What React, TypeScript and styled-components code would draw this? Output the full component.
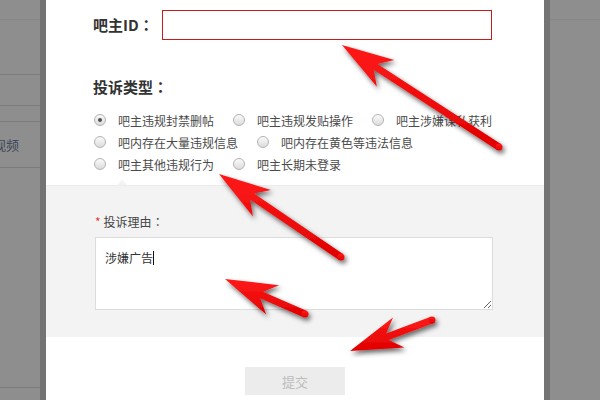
import React from 'react'
import styled, { createGlobalStyle } from 'styled-components';

const GlobalStyle = createGlobalStyle`
  html, body {
    margin: 0;
    padding: 0;
    background: #8e8e8e;
  }
  * {
    box-sizing: border-box;
  }
`;

const FONT = `"Microsoft YaHei", "Noto Sans CJK SC", "Noto Sans", sans-serif`;

const Screen = styled.div`
  position: relative;
  width: 600px;
  height: 400px;
  overflow: hidden;
  display: flex;
  background: #8e8e8e;
  font-family: ${FONT};
`;

const BehindLeft = styled.div`
  width: 40px;
  display: flex;
  flex-direction: column;
  overflow: hidden;
`;

const BehindRow = styled.div<{ h: number; faint?: boolean }>`
  height: ${p => p.h}px;
  flex-shrink: 0;
  border-bottom: 1px solid ${p => (p.faint ? '#878787' : '#7b7b7b')};
  display: flex;
  align-items: center;
  justify-content: flex-end;
  white-space: nowrap;
`;

const NavText = styled.span`
  font-size: 13px;
  color: #3d4656;
  margin-right: 12px;
`;

const NavBar = styled.span`
  width: 1px;
  height: 12px;
  background: #7a7a7a;
  margin-right: 9px;
`;

const BehindRight = styled.div`
  flex: 1;
  display: flex;
  flex-direction: column;
`;

const Modal = styled.div`
  width: 510px;
  flex-shrink: 0;
  border-left: 6px solid #737373;
  border-right: 6px solid #747474;
  background: #fff;
  display: flex;
  flex-direction: column;
`;

const Body = styled.div`
  padding: 10px 0 0 47px;
`;

const IdRow = styled.div`
  display: flex;
  align-items: center;
  gap: 8px;
  height: 30px;
`;

const Heading = styled.div`
  font-size: 15px;
  font-weight: bold;
  color: #333;
  line-height: 22px;
`;

// full-width colon centred in its box, as the Windows font draws it
const Colon = styled.span`
  font-family: "Noto Sans CJK TC", "Noto Sans CJK SC", sans-serif;
`;

const IdInput = styled.input`
  width: 330px;
  height: 30px;
  border: 1px solid #c71a1a;
  outline: none;
  background: #fff;
`;

const TypeTitle = styled(Heading)`
  margin-top: 36px;
`;

const RadioGroup = styled.div`
  margin: 11px 0 10px 1px;
`;

const RadioRow = styled.div`
  display: flex;
  align-items: center;
  height: 22px;
`;

const RadioItem = styled.label`
  display: inline-flex;
  align-items: center;
  margin-right: 19px;
  font-size: 12px;
  color: #4a4a4a;
  white-space: nowrap;
`;

const RadioDot = styled.span<{ checked?: boolean }>`
  position: relative;
  width: 12px;
  height: 12px;
  border-radius: 50%;
  border: 1px solid #b3b3b3;
  background: linear-gradient(#fafafa, #dcdcdc);
  margin-right: 12px;
  display: flex;
  align-items: center;
  justify-content: center;

  &::after {
    content: '';
    display: ${p => (p.checked ? 'block' : 'none')};
    width: 4px;
    height: 4px;
    border-radius: 50%;
    background: #505050;
  }
`;

const ReasonPanel = styled.div`
  position: relative;
  height: 152px;
  background: #f3f3f3;
  border-top: 1px solid #ececec;
  padding: 26px 0 0 49px;

  &::before {
    content: '';
    position: absolute;
    top: -6px;
    left: 71px;
    border-left: 5px solid transparent;
    border-right: 5px solid transparent;
    border-bottom: 5px solid #f3f3f3;
  }
`;

const ReasonLabel = styled.div`
  font-size: 12px;
  line-height: 20px;
  color: #444;
`;

const Star = styled.span`
  color: #e23b3b;
  margin-right: 3px;
`;

const TextWrap = styled.div`
  position: relative;
  margin-top: 5px;
  width: 398px;
`;

const ReasonBox = styled.textarea`
  display: block;
  width: 398px;
  height: 73px;
  border: 1px solid #dcdcdc;
  background: #fff;
  padding: 11px 9px;
  font-family: ${FONT};
  font-size: 12px;
  line-height: 18px;
  color: #333;
  outline: none;
  resize: both;
`;

const Caret = styled.span`
  position: absolute;
  left: 58px;
  top: 14px;
  width: 1px;
  height: 14px;
  background: #111;
`;

const Footer = styled.div`
  flex: 1;
  display: flex;
  justify-content: center;
  padding-top: 30px;
`;

const SubmitButton = styled.button`
  width: 100px;
  height: 28px;
  border: none;
  background: #ececec;
  color: #bdbdbd;
  font-family: ${FONT};
  font-size: 13px;
  cursor: default;
`;

const ArrowLayer = styled.svg`
  position: absolute;
  left: 0;
  top: 0;
  pointer-events: none;
`;

type Pt = [number, number];

// builds a notched arrow shape pointing from tail to tip
const arrowPoints = (tip: Pt, tail: Pt, head = 52, half = 16, notch = 40, shaft = 7) => {
  const dx = tail[0] - tip[0];
  const dy = tail[1] - tip[1];
  const len = Math.hypot(dx, dy);
  const ux = dx / len;
  const uy = dy / len;
  const px = -uy;
  const py = ux;
  const at = (a: number, b: number): string =>
    `${(tip[0] + ux * a + px * b).toFixed(1)},${(tip[1] + uy * a + py * b).toFixed(1)}`;
  const s = shaft / 2;
  return [
    at(0, 0),
    at(head, half),
    at(notch, s),
    at(len, s),
    at(len, -s),
    at(notch, -s),
    at(head, -half),
  ].join(' ');
};

const arrows: { tip: Pt; tail: Pt }[] = [
  { tip: [342, 45], tail: [499, 147] },
  { tip: [219, 174], tail: [341, 257] },
  { tip: [225, 279], tail: [305, 314] },
  { tip: [350, 351], tail: [432, 320] },
];

const Arrows = () => (
  <ArrowLayer width="600" height="400" viewBox="0 0 600 400">
    <defs>
      <filter id="arrowShadow" x="-20%" y="-20%" width="140%" height="140%">
        <feDropShadow dx="2" dy="3" stdDeviation="2.5" floodColor="#000" floodOpacity="0.6" />
      </filter>
      <linearGradient id="arrowFill" x1="0" y1="0" x2="0" y2="1">
        <stop offset="0" stopColor="#ff1a1a" />
        <stop offset="1" stopColor="#e00000" />
      </linearGradient>
    </defs>
    {arrows.map((a, i) => (
      <g key={i} filter="url(#arrowShadow)" fill="url(#arrowFill)">
        <polygon points={arrowPoints(a.tip, a.tail)} />
        <circle cx={a.tail[0]} cy={a.tail[1]} r="3.5" />
      </g>
    ))}
  </ArrowLayer>
);

const radioRows: { text: string; checked?: boolean }[][] = [
  [{ text: '吧主违规封禁删帖', checked: true }, { text: '吧主违规发贴操作' }, { text: '吧主涉嫌谋私获利' }],
  [{ text: '吧内存在大量违规信息' }, { text: '吧内存在黄色等违法信息' }],
  [{ text: '吧主其他违规行为' }, { text: '吧主长期未登录' }],
];

const App = () => {
  return (
    <>
      <GlobalStyle />
      <Screen>
        <BehindLeft>
          <BehindRow h={20} faint />
          <BehindRow h={55} />
          <BehindRow h={31} />
          <BehindRow h={16} />
          <BehindRow h={46}>
            <NavText>视频</NavText>
            <NavBar />
          </BehindRow>
          <BehindRow h={220} />
        </BehindLeft>

        <Modal>
          <Body>
            <IdRow>
              <Heading>吧主ID<Colon>：</Colon></Heading>
              <IdInput type="text" />
            </IdRow>

            <TypeTitle>投诉类型<Colon>：</Colon></TypeTitle>

            <RadioGroup>
              {radioRows.map((row, r) => (
                <RadioRow key={r}>
                  {row.map(item => (
                    <RadioItem key={item.text}>
                      <RadioDot checked={item.checked} />
                      {item.text}
                    </RadioItem>
                  ))}
                </RadioRow>
              ))}
            </RadioGroup>
          </Body>

          <ReasonPanel>
            <ReasonLabel>
              <Star>*</Star>投诉理由<Colon>：</Colon>
            </ReasonLabel>
            <TextWrap>
              <ReasonBox readOnly value="涉嫌广告" />
              <Caret />
            </TextWrap>
          </ReasonPanel>

          <Footer>
            <SubmitButton>提交</SubmitButton>
          </Footer>
        </Modal>

        <BehindRight>
          <BehindRow h={20} faint />
        </BehindRight>

        <Arrows />
      </Screen>
    </>
  )
}

export default App
